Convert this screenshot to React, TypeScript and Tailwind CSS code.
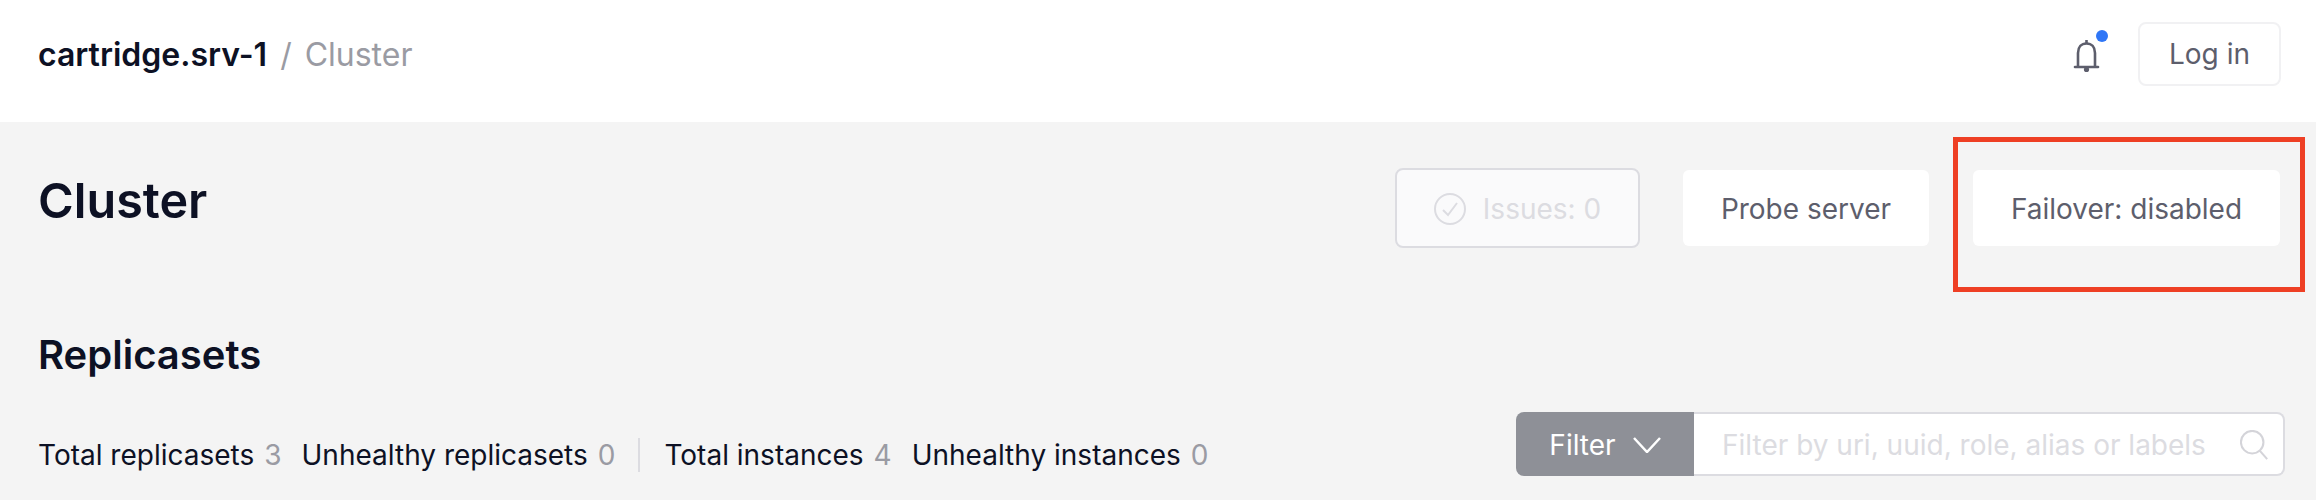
const font = { fontFamily: "Inter, 'Noto Sans', sans-serif" };

function Bell() {
  return (
    <span className="relative block h-[44px] w-[44px]">
      <svg viewBox="0 0 44 44" className="absolute inset-0 h-[44px] w-[44px]" fill="none" stroke="#5d5e6c" strokeWidth="2.6">
        <path d="M14 35V21C14 15 17.5 11.5 22.5 11.5C27.5 11.5 31 15 31 21V35" />
        <path d="M22.5 8V11.5" />
        <path d="M11 35H34" strokeLinecap="round" />
        <circle cx="22.5" cy="37.5" r="2.6" fill="#5d5e6c" stroke="none" />
      </svg>
      <span className="absolute left-[32px] top-[-2px] h-[12px] w-[12px] rounded-full bg-[#2f76f6]" />
    </span>
  );
}

function Stat({ label, value }: { label: string; value: number }) {
  return (
    <span className="flex gap-[10px]">
      <span className="text-[#0d1124]">{label}</span>
      <span className="text-[#9a9ba3]">{value}</span>
    </span>
  );
}

export default function App() {
  return (
    <div className="relative h-[500px] overflow-hidden bg-[#f4f4f4]" style={font}>
      <header className="flex h-[122px] items-center justify-between bg-white pb-[12px] pl-[38px] pr-[35px]">
        <div className="flex items-baseline text-[32px] leading-[40px]">
          <span className="font-semibold text-[#0d1124]">cartridge.srv-1</span>
          <span className="ml-[13px] text-[#9a9ba3]">/</span>
          <span className="ml-[13px] text-[#9a9ba3]">Cluster</span>
        </div>
        <div className="mb-[2px] flex items-center gap-[30px]">
          <Bell />
          <button className="h-[64px] w-[143px] rounded-[8px] border-2 border-[#f1f1f3] bg-white text-[28px] text-[#5d5e6c]">
            Log in
          </button>
        </div>
      </header>

      <main className="pl-[38px] pr-[31px]">
        <div className="flex items-start justify-between pt-[46px]">
          <h1 className="pt-[1px] text-[48.5px] font-semibold leading-[64px] text-[#0d1124]">Cluster</h1>
          <div className="mr-[5px] flex items-center gap-[44px]">
            <button className="mr-[-1px] flex h-[80px] w-[245px] items-center justify-center gap-[17px] rounded-[8px] border-2 border-[#dcdce1] bg-[#fafafb] pt-[1px] text-[28px] text-[#dcdce1]">
              <svg viewBox="0 0 32 32" className="h-[32px] w-[32px]" fill="none" stroke="#dcdce1" strokeWidth="2">
                <circle cx="16" cy="16" r="15" />
                <path d="M9 17L14 22L23 10" />
              </svg>
              Issues: 0
            </button>
            <button className="h-[76px] w-[246px] rounded-[6px] bg-white pt-[1px] text-[28px] text-[#5d5e6c]">Probe server</button>
            <button className="h-[76px] w-[307px] rounded-[6px] bg-white pt-[1px] text-[28px] text-[#5d5e6c]">Failover: disabled</button>
          </div>
        </div>

        <h2 className="mt-[82px] text-[40px] font-semibold leading-[50px] text-[#0d1124]">Replicasets</h2>

        <div className="mt-[32px] flex items-start justify-between">
          <div className="flex items-center pt-[25px] text-[28px] leading-[36px]">
            <Stat label="Total replicasets" value={3} />
            <span className="ml-[20px]"><Stat label="Unhealthy replicasets" value={0} /></span>
            <span className="ml-[23px] mr-[24px] h-[34px] w-[2px] bg-[#dcdce1]" />
            <Stat label="Total instances" value={4} />
            <span className="ml-[20px]"><Stat label="Unhealthy instances" value={0} /></span>
          </div>
          <div className="flex h-[64px] w-[769px]">
            <button className="flex w-[178px] items-center justify-center gap-[17px] rounded-l-[8px] bg-[#8e9097] pt-[1px] text-[28px] text-white">
              Filter
              <svg viewBox="0 0 28 16" className="h-[16px] w-[28px]" fill="none" stroke="white" strokeWidth="2.5">
                <path d="M1 1L14 15L27 1" />
              </svg>
            </button>
            <div className="flex flex-1 items-center justify-between rounded-r-[8px] border-2 border-l-0 border-[#dcdce1] bg-white pl-[28px] pr-[13px] pt-[1px]">
              <span className="text-[28px] text-[#dcdce1]">Filter by uri, uuid, role, alias or labels</span>
              <svg viewBox="0 0 32 32" className="h-[30px] w-[30px]" fill="none" stroke="#d4d4d9" strokeWidth="2.2">
                <circle cx="13" cy="13" r="12" />
                <path d="M21 22L29 31" />
              </svg>
            </div>
          </div>
        </div>
      </main>

      <div className="pointer-events-none absolute left-[1953px] top-[137px] h-[155px] w-[352px] border-[5px] border-[#ee3f24]" />
    </div>
  );
}
